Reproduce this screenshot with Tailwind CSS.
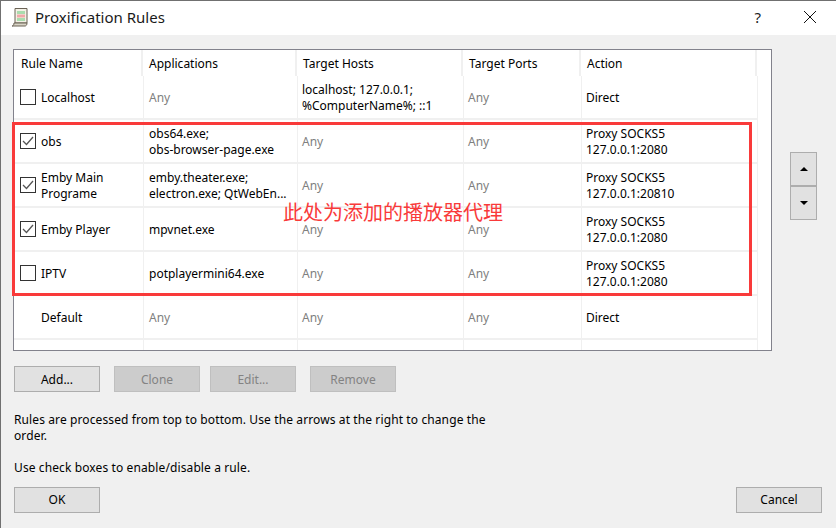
<!DOCTYPE html>
<html>
  <head>
    <title>Proxification Rules</title>
    <script src="https://cdn.jsdelivr.net/npm/@tailwindcss/browser@4"></script>
  </head>
  <body class="bg-[#f0f0f0]">
    <div class="relative w-[836px] h-[528px] overflow-hidden bg-[#f0f0f0] border-t border-l border-[#707070] font-['Noto_Sans','Open_Sans',sans-serif] text-[12px] leading-4 text-black">
      <!-- title bar -->
      <div class="flex items-center h-[34px] pb-[2px] bg-white">
        <svg class="ml-[10px] w-[18px] h-[20px]" viewBox="0 0 18 20">
          <path d="M4 1.500h12v14.500H4z" fill="#f4f1e6" stroke="#6a6255" />
          <path d="M6 4h8v3H6z" fill="#a9dcae" />
          <path d="M6 7.500h8v3H6z" fill="#f0a8a8" />
          <path d="M6 11h8v3H6z" fill="#a9dcae" />
          <path d="M1 19h13c1 0 2-1 2-3H3c0 2-1 3-2 3z" fill="#d8d4c6" stroke="#6a6255" />
        </svg>
        <span class="ml-[6px] text-[15px] text-[#1a1a1a]">Proxification Rules</span>
        <span class="ml-auto mr-[42px] text-[15px] text-[#222]">?</span>
        <svg class="mr-[19px] w-[14px] h-[14px]" viewBox="0 0 14 14">
          <path d="M1 1l12 12M13 1L1 13" stroke="#111" stroke-width="1" fill="none" />
        </svg>
      </div>

      <div class="flex items-start mt-[14px] ml-[12px]">
        <!-- rules table -->
        <div class="w-[759px] h-[302px] overflow-hidden bg-white border border-[#82828c]">
          <div class="grid grid-cols-[129px_154px_166px_118px_176px] w-[743px]">
            <div class="h-[26px] flex items-center pt-[2px] pl-[7px] border-r-2 border-[#f0f0f0]">Rule Name</div>
            <div class="h-[26px] flex items-center pt-[2px] pl-[6px] border-r-2 border-[#f0f0f0]">Applications</div>
            <div class="h-[26px] flex items-center pt-[2px] pl-[6px] border-r-2 border-[#f0f0f0]">Target Hosts</div>
            <div class="h-[26px] flex items-center pt-[2px] pl-[6px] border-r-2 border-[#f0f0f0]">Target Ports</div>
            <div class="h-[26px] flex items-center pt-[2px] pl-[6px] border-r-2 border-[#f0f0f0]">Action</div>
          </div>
          <div class="grid grid-cols-[130px_154px_166px_118px_176px] auto-rows-[44px] w-[744px]">
            <!-- Localhost -->
            <div class="flex items-center gap-[5px] pl-[6px] border-r border-b-2 border-[#f0f0f0]"><span class="w-4 h-4 border border-[#333] bg-white"></span><span class="pt-[2px]">Localhost</span></div>
            <div class="flex items-center pt-[2px] pl-[5px] border-r border-b-2 border-[#f0f0f0] text-[#808080]">Any</div>
            <div class="flex items-center pt-[2px] pl-[4px] border-r border-b-2 border-[#f0f0f0]"><span>localhost; 127.0.0.1;<br />%ComputerName%; ::1</span></div>
            <div class="flex items-center pt-[2px] pl-[4px] border-r border-b-2 border-[#f0f0f0] text-[#808080]">Any</div>
            <div class="flex items-center pt-[2px] pl-[4px] border-r border-b-2 border-[#f0f0f0]">Direct</div>
            <!-- obs -->
            <div class="flex items-center gap-[5px] pl-[6px] border-r border-b-2 border-[#f0f0f0]">
              <span class="w-4 h-4 border border-[#333] bg-white"><svg viewBox="0 0 14 14" class="w-[14px] h-[14px]"><path d="M2 7l3.500 3.500L12 3" stroke="#555" stroke-width="1.300" fill="none" /></svg></span><span class="pt-[2px]">obs</span>
            </div>
            <div class="flex items-center pt-[2px] pl-[5px] border-r border-b-2 border-[#f0f0f0]"><span>obs64.exe;<br />obs-browser-page.exe</span></div>
            <div class="flex items-center pt-[2px] pl-[4px] border-r border-b-2 border-[#f0f0f0] text-[#808080]">Any</div>
            <div class="flex items-center pt-[2px] pl-[4px] border-r border-b-2 border-[#f0f0f0] text-[#808080]">Any</div>
            <div class="flex items-center pt-[2px] pl-[4px] border-r border-b-2 border-[#f0f0f0]"><span>Proxy SOCKS5<br />127.0.0.1:2080</span></div>
            <!-- Emby Main Programe -->
            <div class="flex items-center gap-[5px] pl-[6px] border-r border-b-2 border-[#f0f0f0]">
              <span class="w-4 h-4 border border-[#333] bg-white"><svg viewBox="0 0 14 14" class="w-[14px] h-[14px]"><path d="M2 7l3.500 3.500L12 3" stroke="#555" stroke-width="1.300" fill="none" /></svg></span><span class="pt-[2px]">Emby Main<br />Programe</span>
            </div>
            <div class="flex items-center pt-[2px] pl-[5px] border-r border-b-2 border-[#f0f0f0]"><span>emby.theater.exe;<br />electron.exe; QtWebEn...</span></div>
            <div class="flex items-center pt-[2px] pl-[4px] border-r border-b-2 border-[#f0f0f0] text-[#808080]">Any</div>
            <div class="flex items-center pt-[2px] pl-[4px] border-r border-b-2 border-[#f0f0f0] text-[#808080]">Any</div>
            <div class="flex items-center pt-[2px] pl-[4px] border-r border-b-2 border-[#f0f0f0]"><span>Proxy SOCKS5<br />127.0.0.1:20810</span></div>
            <!-- Emby Player -->
            <div class="flex items-center gap-[5px] pl-[6px] border-r border-b-2 border-[#f0f0f0]">
              <span class="w-4 h-4 border border-[#333] bg-white"><svg viewBox="0 0 14 14" class="w-[14px] h-[14px]"><path d="M2 7l3.500 3.500L12 3" stroke="#555" stroke-width="1.300" fill="none" /></svg></span><span class="pt-[2px]">Emby Player</span>
            </div>
            <div class="flex items-center pt-[2px] pl-[5px] border-r border-b-2 border-[#f0f0f0]">mpvnet.exe</div>
            <div class="flex items-center pt-[2px] pl-[4px] border-r border-b-2 border-[#f0f0f0] text-[#808080]">Any</div>
            <div class="flex items-center pt-[2px] pl-[4px] border-r border-b-2 border-[#f0f0f0] text-[#808080]">Any</div>
            <div class="flex items-center pt-[2px] pl-[4px] border-r border-b-2 border-[#f0f0f0]"><span>Proxy SOCKS5<br />127.0.0.1:2080</span></div>
            <!-- IPTV -->
            <div class="flex items-center gap-[5px] pl-[6px] border-r border-b-2 border-[#f0f0f0]"><span class="w-4 h-4 border border-[#333] bg-white"></span><span class="pt-[2px]">IPTV</span></div>
            <div class="flex items-center pt-[2px] pl-[5px] border-r border-b-2 border-[#f0f0f0]">potplayermini64.exe</div>
            <div class="flex items-center pt-[2px] pl-[4px] border-r border-b-2 border-[#f0f0f0] text-[#808080]">Any</div>
            <div class="flex items-center pt-[2px] pl-[4px] border-r border-b-2 border-[#f0f0f0] text-[#808080]">Any</div>
            <div class="flex items-center pt-[2px] pl-[4px] border-r border-b-2 border-[#f0f0f0]"><span>Proxy SOCKS5<br />127.0.0.1:2080</span></div>
            <!-- Default -->
            <div class="flex items-center pt-[2px] pl-[27px] border-r border-b-2 border-[#f0f0f0]">Default</div>
            <div class="flex items-center pt-[2px] pl-[5px] border-r border-b-2 border-[#f0f0f0] text-[#808080]">Any</div>
            <div class="flex items-center pt-[2px] pl-[4px] border-r border-b-2 border-[#f0f0f0] text-[#808080]">Any</div>
            <div class="flex items-center pt-[2px] pl-[4px] border-r border-b-2 border-[#f0f0f0] text-[#808080]">Any</div>
            <div class="flex items-center pt-[2px] pl-[4px] border-r border-b-2 border-[#f0f0f0]">Direct</div>
            <!-- empty row -->
            <div class="border-r border-[#f0f0f0]"></div>
            <div class="border-r border-[#f0f0f0]"></div>
            <div class="border-r border-[#f0f0f0]"></div>
            <div class="border-r border-[#f0f0f0]"></div>
            <div class="border-r border-[#f0f0f0]"></div>
          </div>
        </div>

        <!-- move up / down -->
        <div class="flex flex-col ml-[18px] mt-[103px]">
          <button class="flex items-center justify-center w-[27px] h-[34px] bg-[#e1e1e1] border border-[#adadad]">
            <svg class="w-[8px] h-[4px]" viewBox="0 0 8 4"><path d="M4 0l4 4H0z" fill="#000" /></svg>
          </button>
          <button class="flex items-center justify-center w-[27px] h-[34px] bg-[#e1e1e1] border border-[#adadad]">
            <svg class="w-[8px] h-[4px]" viewBox="0 0 8 4"><path d="M0 0h8L4 4z" fill="#000" /></svg>
          </button>
        </div>
      </div>

      <!-- rule buttons -->
      <div class="flex ml-[13px] mt-[15px]">
        <button class="w-[86px] h-[26px] pt-[2px] bg-[#e1e1e1] border border-[#adadad]">Add...</button>
        <button class="w-[86px] h-[26px] pt-[2px] ml-[14px] bg-[#cccccc] border border-[#bfbfbf] text-[#838383]">Clone</button>
        <button class="w-[86px] h-[26px] pt-[2px] ml-[10px] bg-[#cccccc] border border-[#bfbfbf] text-[#838383]">Edit...</button>
        <button class="w-[86px] h-[26px] pt-[2px] ml-[14px] bg-[#cccccc] border border-[#bfbfbf] text-[#838383]">Remove</button>
      </div>

      <p class="ml-[13px] mt-[20px] w-[500px] tracking-[0.11px]">Rules are processed from top to bottom. Use the arrows at the right to change the<br />order.</p>
      <p class="ml-[13px] mt-[16px] tracking-[0.11px]">Use check boxes to enable/disable a rule.</p>

      <div class="flex justify-between ml-[13px] mr-[14px] mt-[11px]">
        <button class="w-[86px] h-[26px] bg-[#e1e1e1] border border-[#adadad]">OK</button>
        <button class="w-[86px] h-[26px] bg-[#e1e1e1] border border-[#adadad]">Cancel</button>
      </div>

      <!-- annotation over the table -->
      <div class="absolute left-[11px] top-[121px] w-[740px] h-[174px] border-[3px] border-[#f93a3a]"></div>
      <div class="absolute left-[282px] top-[199px] text-[20px] leading-6 text-[#f93a3a] font-['Noto_Sans_CJK_SC',sans-serif]">此处为添加的播放器代理</div>
    </div>
  </body>
</html>
